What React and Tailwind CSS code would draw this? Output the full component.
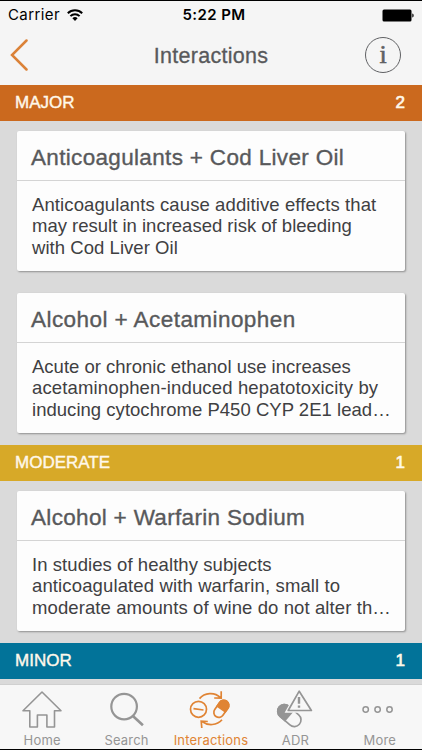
const sections = [
  {
    level: "MAJOR",
    count: 2,
    color: "bg-[#cb691e]",
    items: [
      {
        title: "Anticoagulants + Cod Liver Oil",
        titleClass: "tracking-[0.33px]",
        lines: [
          { text: "Anticoagulants cause additive effects that", className: "tracking-[0.1px]" },
          { text: "may result in increased risk of bleeding" },
          { text: "with Cod Liver Oil", className: "tracking-[0.05px]" },
        ],
      },
      {
        title: "Alcohol + Acetaminophen",
        titleClass: "tracking-[0.44px]",
        lines: [
          { text: "Acute or chronic ethanol use increases" },
          { text: "acetaminophen-induced hepatotoxicity by", className: "tracking-[0.15px]" },
          { text: "inducing cytochrome P450 CYP 2E1 lead…", className: "tracking-[0.03px]" },
        ],
      },
    ],
  },
  {
    level: "MODERATE",
    count: 1,
    color: "bg-[#d7a928]",
    items: [
      {
        title: "Alcohol + Warfarin Sodium",
        titleClass: "tracking-[0.32px]",
        lines: [
          { text: "In studies of healthy subjects", className: "tracking-[0.07px]" },
          { text: "anticoagulated with warfarin, small to", className: "tracking-[0.13px]" },
          { text: "moderate amounts of wine do not alter th…", className: "tracking-[0.1px]" },
        ],
      },
    ],
  },
  { level: "MINOR", count: 1, color: "bg-[#027399]", items: [] },
];

function HomeIcon() {
  return (
    <svg viewBox="18 686 48 44" className="w-12 h-11" fill="none" stroke="currentColor" strokeWidth="1.6" strokeLinejoin="round">
      <path d="M42 692 23 710.7h6.8V727h7.600V715h9.500v12h7.600v-16.300H61Z" />
    </svg>
  );
}

function SearchIcon() {
  return (
    <svg viewBox="102.600 686 48 44" className="w-12 h-11" fill="none" stroke="currentColor" strokeWidth="2.2">
      <circle cx="123.700" cy="706.600" r="12.800" />
      <path d="m132.500 716 10 9.300" strokeWidth="2.600" />
    </svg>
  );
}

function InteractionsIcon() {
  return (
    <svg viewBox="187 686 48 44" className="w-12 h-11" fill="none" stroke="currentColor" strokeWidth="1.7">
      <circle cx="198.500" cy="709.300" r="8" />
      <path d="m193.500 708.600 10 1.400" />
      <g transform="rotate(35 221.300 708.900)">
        <rect x="216.300" y="699.600" width="10" height="18.600" rx="5" />
        <path d="M216.300 709v-4.400a5 5 0 0 1 10 0V709Z" fill="currentColor" />
      </g>
      <path d="M199.500 698.600c5-6 15-7 21-1M221.200 691.300v6.800l-7-.1" />
      <path d="M222 719.800c-5 5.700-14 6.300-20 1.800M201.800 728l-.6-6.800 6.600.3" />
    </svg>
  );
}

function AdrIcon() {
  return (
    <svg viewBox="271 686 48 44" className="w-12 h-11" fill="none" stroke="currentColor" strokeWidth="1.7">
      <g transform="rotate(-49 290 716)">
        <rect x="283.200" y="702" width="13.400" height="26.500" rx="6.700" />
        <path d="M283.200 715v-6.300a6.700 6.700 0 0 1 13.400 0V715Z" fill="currentColor" />
      </g>
      <path d="m299.200 690.800 12.400 19.900h-23.600Z" className="fill-[#f7f7f7]" stroke="#f7f7f7" strokeWidth="4" />
      <path d="m299.200 691.200 12.200 19.300h-23.200Z" strokeLinejoin="round" />
      <path d="M299 697v6.800M299 705.400v2.400" strokeWidth="2.400" />
    </svg>
  );
}

function MoreIcon() {
  return (
    <svg viewBox="355.500 686 48 44" className="w-12 h-11" fill="none" stroke="currentColor" strokeWidth="1.5">
      <circle cx="365.200" cy="709.500" r="2.700" />
      <circle cx="377.100" cy="709.500" r="2.700" />
      <circle cx="389" cy="709.500" r="2.700" />
    </svg>
  );
}

const tabs = [
  { label: "Home", Icon: HomeIcon },
  { label: "Search", Icon: SearchIcon },
  { label: "Interactions", Icon: InteractionsIcon, active: true },
  { label: "ADR", Icon: AdrIcon },
  { label: "More", Icon: MoreIcon },
];

function StatusBar() {
  return (
    <div className="grid grid-cols-3 items-center h-[28px] pl-2 pr-2 font-[Inter,sans-serif] text-black">
      <div className="flex items-center gap-[7px]">
        <span className="text-[15px] tracking-[0.4px]">Carrier</span>
        <svg viewBox="0 0 16 12" className="w-4 h-3" fill="none" stroke="currentColor" strokeWidth="2">
          <path d="M.8 4.300a10.300 10.300 0 0 1 14.400 0M3.400 7.100a6.600 6.600 0 0 1 9.200 0" />
          <path d="m8 12-2.600-2.800a3.700 3.700 0 0 1 5.200 0Z" fill="currentColor" stroke="none" />
        </svg>
      </div>
      <span className="text-center text-[15px] font-semibold tracking-[0.4px] whitespace-nowrap pl-[6px]">5:22 PM</span>
      <svg viewBox="0 0 32 13" className="w-8 h-[13px] justify-self-end" fill="currentColor">
        <rect x=".5" y=".5" width="29" height="12" rx="1.500" />
        <path d="M30.300 4.500c1.800.4 1.800 3.600 0 4Z" />
      </svg>
    </div>
  );
}

function Card({ title, titleClass, lines }) {
  return (
    <article className="h-[140px] bg-[#fdfdfd] rounded-[2px] shadow-[1px_1px_2px_rgba(0,0,0,0.35)] whitespace-nowrap">
      <h2
        className={`h-[50px] pl-[14px] pt-1 leading-[46px] border-b border-[#d4d4d4] text-[22.5px] text-[#58595b] [-webkit-text-stroke:0.35px_#58595b] ${titleClass}`}
      >
        {title}
      </h2>
      <p className="pl-[15px] pt-[13px] text-[18.5px] leading-[21.3px] text-[#3f4042]">
        {lines.map(({ text, className = "" }) => (
          <span key={text} className={`block ${className}`}>
            {text}
          </span>
        ))}
      </p>
    </article>
  );
}

export default function App() {
  return (
    <div className="flex flex-col w-[422px] h-[750px] overflow-hidden bg-[#dadada] border-y border-black font-['Liberation_Sans',Arial,sans-serif]">
      <header className="h-[84px] shrink-0 bg-[#f5f5f5]">
        <StatusBar />
        <div className="grid grid-cols-[60px_1fr_60px] items-center h-[51px]">
          <svg viewBox="0 0 18 32" className="w-[18px] h-8 ml-[10px]" fill="none" stroke="#db8238" strokeWidth="2.5" strokeLinecap="round">
            <path d="M16.500 1.500 2 16l14.500 14.500" />
          </svg>
          <h1 className="text-center text-[21.5px] tracking-[0.3px] text-[#58595b] [-webkit-text-stroke:0.3px_#58595b] pt-[3px]">
            Interactions
          </h1>
          <span className="flex items-center justify-center w-9 h-9 ml-[3px] rounded-full border-[1.5px] border-[#606164] font-['Liberation_Serif',serif] text-[26px] leading-none text-[#606164] [-webkit-text-stroke:0.6px_#606164]">
            i
          </span>
        </div>
      </header>

      <main className="flex-1 min-h-0 overflow-hidden">
        {sections.map((section) => (
          <section key={section.level}>
            <div
              className={`flex items-center justify-between h-9 pl-[15px] pr-[17px] text-[17px] text-[#fff8ea] [-webkit-text-stroke:0.4px_#fff8ea] ${section.color}`}
            >
              <span>{section.level}</span>
              <span className="[-webkit-text-stroke:0.7px_#fff8ea]">{section.count}</span>
            </div>
            {section.items.length > 0 && (
              <div className="flex flex-col gap-[22px] pt-[10px] pb-3 pl-[17px] pr-[17px]">
                {section.items.map((item) => (
                  <Card key={item.title} {...item} />
                ))}
              </div>
            )}
          </section>
        ))}
      </main>

      <nav className="grid grid-cols-5 h-[65px] shrink-0 bg-[#f7f7f7] border-t border-[#d0d0d0] pt-px">
        {tabs.map(({ label, Icon, active }) => (
          <a
            key={label}
            className={`flex flex-col items-center font-[Inter,sans-serif] ${active ? "text-[#e08434]" : "text-[#959595]"}`}
          >
            <Icon />
            <span className="text-[13px] leading-4 tracking-[0.2px] pt-[2px]">{label}</span>
          </a>
        ))}
      </nav>
    </div>
  );
}
